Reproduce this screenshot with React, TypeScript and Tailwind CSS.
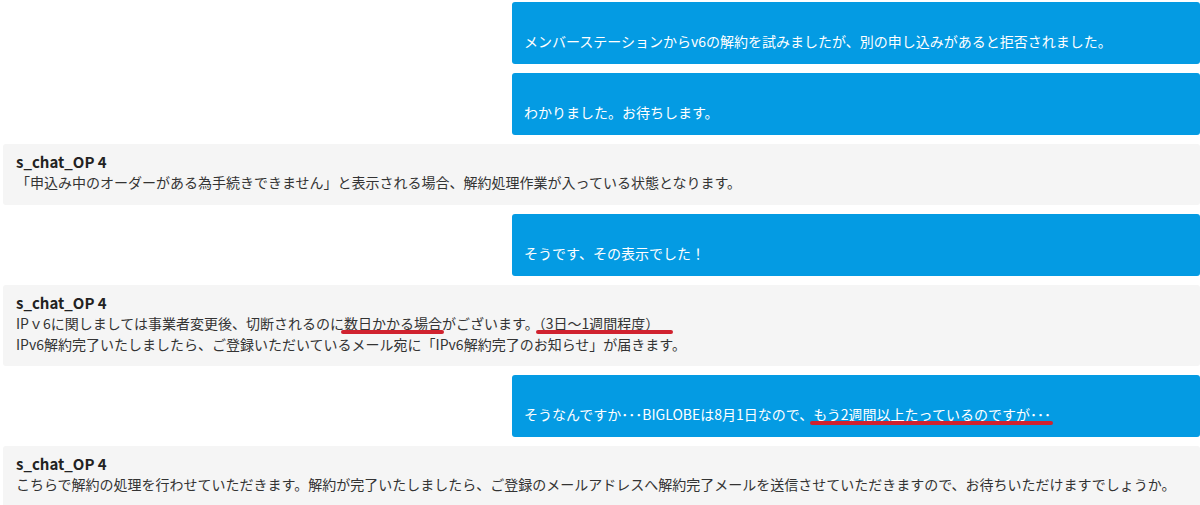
import React from "react";

const font = { fontFamily: '"Noto Sans CJK JP", "Noto Sans", sans-serif' };

function Mark({ children, className = "" }: { children: React.ReactNode; className?: string }) {
  return (
    <span className="relative">
      {children}
      <span className={`absolute left-[-3px] right-[-2px] bottom-[-1px] h-[4px] rounded-full bg-[#d0222f] ${className}`} />
    </span>
  );
}

function Mine({ children }: { children: React.ReactNode }) {
  return (
    <div className="ml-[512px] rounded-[3px] bg-[#049be3] pl-3 pt-[29px] pb-[13px] text-[14px] leading-[20px] text-white">
      {children}
    </div>
  );
}

function Op({ lines }: { lines: React.ReactNode[] }) {
  return (
    <div className="ml-[3px] rounded-[3px] bg-[#f5f5f5] pl-[13px] pt-[7px] pb-[12px] text-[14px] leading-[21px] text-[#333]">
      <div className="text-[15px] font-bold text-[#222]">s_chat_OP 4</div>
      {lines.map((l, i) => (
        <div key={i} className={i > 0 ? "leading-[20px]" : ""}>{l}</div>
      ))}
    </div>
  );
}

export default function App() {
  return (
    <div className="h-[505px] w-[1200px] overflow-hidden bg-white pt-[2px]" style={font}>
      <div className="flex flex-col gap-[9px]">
        <Mine>メンバーステーションからv6の解約を試みましたが、別の申し込みがあると拒否されました。</Mine>
        <Mine>わかりました。お待ちします。</Mine>
        <Op lines={["「申込み中のオーダーがある為手続きできません」と表示される場合、解約処理作業が入っている状態となります。"]} />
        <Mine>そうです、その表示でした！</Mine>
        <Op
          lines={[
            <>
              IPｖ6に関しましては事業者変更後、切断されるのに<Mark>数日かかる場合</Mark>がございます。<Mark className="right-[-14px]">（3日～1週間程度）</Mark>
            </>,
            "IPv6解約完了いたしましたら、ご登録いただいているメール宛に「IPv6解約完了のお知らせ」が届きます。",
          ]}
        />
        <Mine>
          そうなんですか･･･BIGLOBEは8月1日なので、<Mark>もう2週間以上たっているのですが･･･</Mark>
        </Mine>
        <Op lines={["こちらで解約の処理を行わせていただきます。解約が完了いたしましたら、ご登録のメールアドレスへ解約完了メールを送信させていただきますので、お待ちいただけますでしょうか。"]} />
      </div>
    </div>
  );
}
